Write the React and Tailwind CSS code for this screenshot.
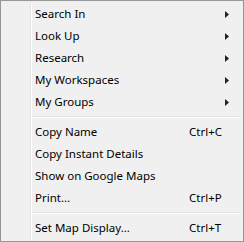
const items = [
  [
    { label: 'Search In', sub: true },
    { label: 'Look Up', sub: true },
    { label: 'Research', sub: true },
    { label: 'My Workspaces', sub: true },
    { label: 'My Groups', sub: true },
  ],
  [
    { label: 'Copy Name', key: 'Ctrl+C' },
    { label: 'Copy Instant Details' },
    { label: 'Show on Google Maps' },
    { label: 'Print...', key: 'Ctrl+P' },
  ],
  [{ label: 'Set Map Display...', key: 'Ctrl+T' }],
]

function Arrow() {
  return (
    <svg width="4" height="7" viewBox="0 0 4 7" className="block">
      <path d="M0 0 L4 3.5 L0 7 Z" fill="#222" />
    </svg>
  )
}

export default function App() {
  return (
    <div className="w-[244px] h-[242px] bg-[#f0f0f0] border border-[#979797] flex font-['Segoe_UI','Noto_Sans',sans-serif] text-[11.5px] text-black">
      {/* gutter */}
      <div className="w-[29px] shrink-0" />
      <div className="w-[2px] shrink-0 my-[2px] border-l border-[#e2e3e3] border-r border-r-white" />

      <div className="flex-1 flex flex-col pt-[2px] pb-[2px] mr-[2px]">
        {items.map((group, gi) => (
          <div key={gi}>
            {gi > 0 && (
              <div className="py-[3px]">
                <div className="h-px bg-[#e2e3e3]" />
                <div className="h-px bg-white" />
              </div>
            )}
            {group.map((item) => (
              <div key={item.label} className="h-[22px] grid grid-cols-[154px_1fr] items-center pl-[3px] pr-[9px]">
                <span className="whitespace-nowrap leading-none">{item.label}</span>
                <span className="flex justify-between items-center whitespace-nowrap leading-none">
                  {item.key || <span />}
                  {item.sub && <span className="ml-auto mr-[3px]"><Arrow /></span>}
                </span>
              </div>
            ))}
          </div>
        ))}
      </div>
    </div>
  )
}
